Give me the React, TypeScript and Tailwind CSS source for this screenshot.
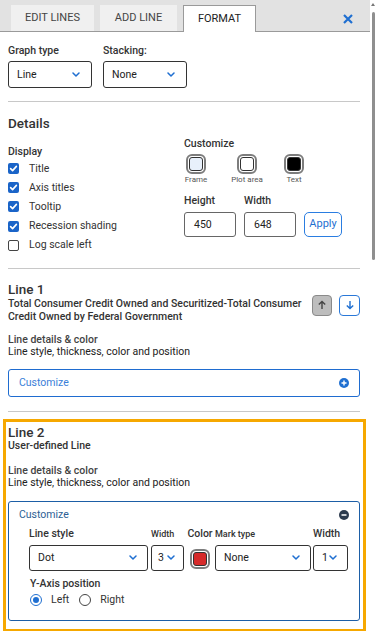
import React from "react";

const Chevron = () => (
  <svg width="8" height="5" viewBox="0 0 8 5" className="shrink-0">
    <path d="M1 1l3 3 3-3" fill="none" stroke="#1f6fd1" strokeWidth="1.5" strokeLinecap="round" strokeLinejoin="round" />
  </svg>
);

const Select = ({ value, className }: { value: string; className: string }) => (
  <div className={"flex items-center justify-between border border-[#333] rounded-[3px] bg-white text-[10.5px] text-[#222] " + className}>
    <span>{value}</span>
    <Chevron />
  </div>
);

const Check = ({ checked, label }: { checked: boolean; label: string }) => (
  <div className="flex items-center h-[19.2px]">
    {checked ? (
      <div className="w-[11px] h-[11px] rounded-[2px] bg-[#1a64c8] flex items-center justify-center">
        <svg width="9" height="9" viewBox="0 0 9 9">
          <path d="M1.6 4.6l2 2 3.8-4.2" fill="none" stroke="white" strokeWidth="1.6" strokeLinecap="round" strokeLinejoin="round" />
        </svg>
      </div>
    ) : (
      <div className="w-[11px] h-[11px] rounded-[2px] border border-[#444] bg-white" />
    )}
    <span className="ml-[10px] text-[10.5px] text-[#333]">{label}</span>
  </div>
);

const Swatch = ({ fill, className }: { fill: string; className?: string }) => (
  <div className={"w-[20px] h-[20px] rounded-[6px] border-2 border-[#7d7d7d] bg-white p-[1px] " + (className || "")}>
    <div className={"w-full h-full rounded-[3px] border border-[#333] " + fill} />
  </div>
);

const Divider = ({ className }: { className: string }) => <div className={"border-t border-[#c8c8c8] " + className} />;

const PlusCircle = () => (
  <svg width="10" height="10" viewBox="0 0 10 10">
    <circle cx="5" cy="5" r="5" fill="#1f6fd1" />
    <path d="M5 2.5v5M2.5 5h5" stroke="white" strokeWidth="1.4" />
  </svg>
);

const MinusCircle = () => (
  <svg width="10" height="10" viewBox="0 0 10 10">
    <circle cx="5" cy="5" r="5" fill="#2b3a4d" />
    <path d="M2.5 5h5" stroke="white" strokeWidth="1.5" />
  </svg>
);

const Radio = ({ on, label }: { on: boolean; label: string }) => (
  <div className="flex items-center">
    {on ? (
      <div className="w-[12px] h-[12px] rounded-full border-[1.5px] border-[#1f6fd1] flex items-center justify-center">
        <div className="w-[6px] h-[6px] rounded-full bg-[#1f6fd1]" />
      </div>
    ) : (
      <div className="w-[12px] h-[12px] rounded-full border border-[#444]" />
    )}
    <span className="ml-[9px] text-[10.5px] text-[#333]">{label}</span>
  </div>
);

const App = () => {
  return (
    <div className="flex w-[375px] h-[631px] overflow-hidden bg-white font-['Roboto',sans-serif]">
      <div className="w-[370px] shrink-0">
        {/* tabs */}
        <div className="flex items-end h-[32px] bg-[#e2e2e2] border-b border-[#9a9a9a]">
          <div className="ml-[11px] w-[83px] h-[26px] bg-[#f0f0f0] flex items-center justify-center text-[11px] text-[#444]">EDIT LINES</div>
          <div className="ml-[6px] w-[77px] h-[26px] bg-[#f0f0f0] flex items-center justify-center text-[11px] text-[#444]">ADD LINE</div>
          <div className="ml-[6px] w-[73px] h-[27px] -mb-px bg-white border border-b-0 border-[#9a9a9a] flex items-center justify-center text-[11px] text-[#222]">FORMAT</div>
          <div className="ml-auto mr-[17px] mb-[7px]">
            <svg width="10" height="10" viewBox="0 0 10 10">
              <path d="M1 1l8 8M9 1L1 9" stroke="#1f6fd1" strokeWidth="2.2" />
            </svg>
          </div>
        </div>

        <div className="pl-[8px] pr-[10px]">
          {/* graph type */}
          <div className="flex pt-[12px]">
            <div className="w-[95px]">
              <div className="text-[10.5px] leading-[14px] font-medium text-[#333]">Graph type</div>
              <Select value="Line" className="mt-[3px] w-[84px] h-[27px] pl-[8px] pr-[11px]" />
            </div>
            <div>
              <div className="text-[10.5px] leading-[14px] font-medium text-[#333]">Stacking:</div>
              <Select value="None" className="mt-[3px] w-[84px] h-[27px] pl-[8px] pr-[11px]" />
            </div>
          </div>
          <Divider className="mt-[13px]" />

          {/* details */}
          <div className="mt-[13px] text-[13.5px] leading-[16px] font-medium text-[#333]">Details</div>
          <div className="flex mt-[6px]">
            <div className="w-[176px] pt-[8px]">
              <div className="text-[10.5px] leading-[14px] font-medium text-[#333]">Display</div>
              <Check checked label="Title" />
              <Check checked label="Axis titles" />
              <Check checked label="Tooltip" />
              <Check checked label="Recession shading" />
              <Check checked={false} label="Log scale left" />
            </div>
            <div>
              <div className="text-[10.5px] leading-[14px] font-medium text-[#333]">Customize</div>
              <div className="flex mt-[3px]">
                <div className="w-[24px] flex flex-col items-center">
                  <Swatch fill="bg-[#e8f0fb]" />
                  <span className="mt-[1px] text-[8px] leading-[10px] text-[#555]">Frame</span>
                </div>
                <div className="ml-[19px] w-[40px] flex flex-col items-center">
                  <Swatch fill="bg-white" />
                  <span className="mt-[1px] text-[8px] leading-[10px] text-[#555]">Plot area</span>
                </div>
                <div className="ml-[17px] w-[20px] flex flex-col items-center">
                  <Swatch fill="bg-black" />
                  <span className="mt-[1px] text-[8px] leading-[10px] text-[#555]">Text</span>
                </div>
              </div>
              <div className="flex mt-[9px] text-[10.5px] leading-[14px] font-medium text-[#333]">
                <span className="w-[60px]">Height</span>
                <span>Width</span>
              </div>
              <div className="flex gap-[8px] mt-[4px]">
                <div className="w-[52px] h-[25px] border border-[#666] rounded-[3px] pl-[9px] flex items-center text-[10.5px] text-[#222]">450</div>
                <div className="w-[52px] h-[25px] border border-[#666] rounded-[3px] pl-[9px] flex items-center text-[10.5px] text-[#222]">648</div>
                <div className="w-[38px] h-[25px] border border-[#2a7de1] rounded-[5px] flex items-center justify-center text-[11px] text-[#1f6fd1]">Apply</div>
              </div>
            </div>
          </div>
          <Divider className="mt-[13px]" />

          {/* line 1 */}
          <div className="flex mt-[12px]">
            <div className="w-[302px]">
              <div className="text-[13.5px] leading-[16px] font-medium text-[#333]">Line 1</div>
              <div className="text-[10.5px] leading-[13px] font-medium text-[#333]">
                Total Consumer Credit Owned and Securitized-Total Consumer Credit Owned by Federal Government
              </div>
            </div>
            <div className="ml-auto mt-[14px] flex gap-[7px] self-start">
              <div className="w-[20px] h-[21px] rounded-[4px] bg-[#bdbdbd] border border-[#8a8a8a] flex items-center justify-center">
                <svg width="10" height="10" viewBox="0 0 10 10">
                  <path d="M5 9V1.5M1.8 4.6L5 1.4l3.2 3.2" fill="none" stroke="#444" strokeWidth="1.4" />
                </svg>
              </div>
              <div className="w-[21px] h-[21px] rounded-[4px] bg-white border border-[#2a78d8] flex items-center justify-center">
                <svg width="10" height="10" viewBox="0 0 10 10">
                  <path d="M5 1v7.5M1.8 5.4L5 8.6l3.2-3.2" fill="none" stroke="#1f6fd1" strokeWidth="1.4" />
                </svg>
              </div>
            </div>
          </div>
          <div className="mt-[11px] text-[10.5px] leading-[12px] font-medium text-[#444]">Line details &amp; color</div>
          <div className="text-[10.5px] leading-[12px] text-[#222]">Line style, thickness, color and position</div>
          <div className="mt-[11px] h-[28px] border border-[#1f6cd0] rounded-[3px] flex items-center justify-between pl-[10px] pr-[10px]">
            <span className="text-[10.5px] text-[#3a80d8]">Customize</span>
            <PlusCircle />
          </div>
          <Divider className="mt-[14px]" />

          {/* line 2 */}
          <div className="mt-[7px] ml-[-5px] mr-[-6px] border-[3px] border-[#f6a800] pl-[2px] pr-[3px] pt-[2px] pb-[8px]">
            <div className="text-[13.5px] leading-[16px] font-medium text-[#333]">Line 2</div>
            <div className="text-[10.5px] leading-[12px] font-medium text-[#333]">User-defined Line</div>
            <div className="mt-[13px] text-[10.5px] leading-[12px] font-medium text-[#444]">Line details &amp; color</div>
            <div className="text-[10.5px] leading-[12px] text-[#222]">Line style, thickness, color and position</div>
            <div className="mt-[12px] border border-[#1d5ea6] rounded-[3px] pb-[12px]">
              <div className="h-[26px] flex items-center justify-between pl-[10px] pr-[10px]">
                <span className="text-[10.5px] text-[#2d5f94]">Customize</span>
                <MinusCircle />
              </div>
              <div className="flex pl-[20px]">
                <div className="w-[119px]">
                  <div className="h-[12px] leading-[12px] text-[10.5px] font-medium text-[#333]">Line style</div>
                  <Select value="Dot" className="mt-[5px] h-[26px] pl-[8px] pr-[10px]" />
                </div>
                <div className="ml-[3px] w-[33px]">
                  <div className="h-[12px] leading-[12px] text-[9px] font-medium text-[#333]">Width</div>
                  <Select value="3" className="mt-[5px] h-[26px] pl-[6px] pr-[8px]" />
                </div>
                <div className="ml-[3px] w-[26px] flex flex-col items-center">
                  <div className="h-[12px] leading-[12px] text-[10.5px] font-medium text-[#333]">Color</div>
                  <Swatch fill="bg-[#d62a2a]" className="mt-[9px]" />
                </div>
                <div className="ml-[2px] w-[96px]">
                  <div className="h-[12px] leading-[12px] text-[9px] font-medium text-[#333]">Mark type</div>
                  <Select value="None" className="mt-[5px] h-[26px] pl-[8px] pr-[10px]" />
                </div>
                <div className="ml-[2px] w-[35px]">
                  <div className="h-[12px] leading-[12px] text-[10.5px] font-medium text-[#333]">Width</div>
                  <Select value="1" className="mt-[5px] h-[26px] pl-[8px] pr-[10px]" />
                </div>
              </div>
              <div className="pl-[21px] mt-[7px] h-[12px] leading-[12px] text-[10.5px] font-medium text-[#333]">Y-Axis position</div>
              <div className="pl-[21px] mt-[2px] h-[16px] flex items-center gap-[10px]">
                <Radio on label="Left" />
                <Radio on={false} label="Right" />
              </div>
            </div>
          </div>
        </div>
      </div>

      {/* scrollbar */}
      <div className="flex-1 flex flex-col items-end pr-0">
        <svg width="4" height="3" viewBox="0 0 4 3" className="mt-[3px] mr-[0.5px]">
          <path d="M2 0L4 3H0z" fill="#777" />
        </svg>
        <div className="mt-[6px] w-[3px] h-[248px] rounded-full bg-[#8f8f8f]" />
      </div>
    </div>
  );
};

export default App;
